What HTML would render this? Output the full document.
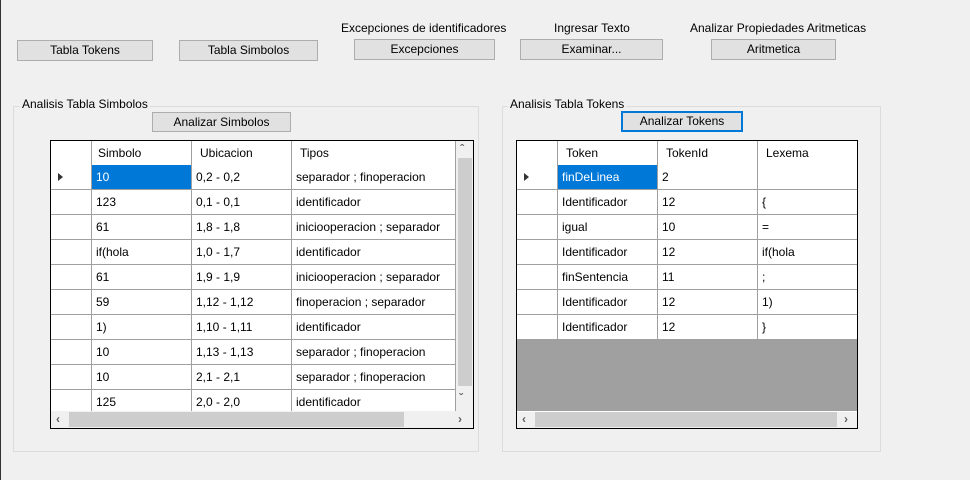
<!DOCTYPE html>
<html><head><meta charset="utf-8"><style>
*{box-sizing:border-box;margin:0;padding:0}
body{width:970px;height:480px;background:#f0f0f0;font-family:"Liberation Sans",sans-serif;font-size:12px;color:#000;position:relative;overflow:hidden}
.a{position:absolute}
.btn{position:absolute;background:#e1e1e1;border:1px solid #adadad;text-align:center;line-height:18px;font-size:12px}
.lbl{position:absolute;font-size:12px;white-space:nowrap}
.grp{position:absolute;border:1px solid #dcdcdc}
.gt{position:absolute;background:#f0f0f0;padding:0 2px;font-size:12px;white-space:nowrap}
.grid{position:absolute;border:1px solid #000;background:#fff;overflow:hidden}
.cell{position:absolute;height:25px;line-height:24px;padding-left:4px;border-right:1px solid #a0a0a0;border-bottom:1px solid #a0a0a0;background:#fff;white-space:nowrap;overflow:hidden}
.sel{background:#0078d7;color:#fff}
.arrow{position:absolute;width:0;height:0;border-top:4px solid transparent;border-bottom:4px solid transparent;border-left:5px solid #333}
.sb{position:absolute;background:#f0f0f0;color:#606060;font-size:12px;font-weight:bold}
</style></head><body>
<div class="a" style="left:0;top:0;width:1px;height:480px;background:#333"></div>
<div class="btn" style="left:17px;top:40px;width:136px;height:21px">Tabla Tokens</div>
<div class="btn" style="left:179px;top:40px;width:139px;height:21px">Tabla Simbolos</div>
<div class="lbl" style="left:341px;top:21px">Excepciones de identificadores</div>
<div class="btn" style="left:354px;top:39px;width:141px;height:21px">Excepciones</div>
<div class="lbl" style="left:554px;top:21px">Ingresar Texto</div>
<div class="btn" style="left:520px;top:39px;width:143px;height:21px">Examinar...</div>
<div class="lbl" style="left:690px;top:21px">Analizar Propiedades Aritmeticas</div>
<div class="btn" style="left:711px;top:39px;width:125px;height:21px">Aritmetica</div>

<div class="grp" style="left:13px;top:106px;width:466px;height:346px"></div>
<div class="gt" style="left:20px;top:97px">Analisis Tabla Simbolos</div>
<div class="btn" style="left:152px;top:112px;width:139px;height:20px">Analizar Simbolos</div>

<div class="grp" style="left:502px;top:106px;width:379px;height:346px"></div>
<div class="gt" style="left:508px;top:97px">Analisis Tabla Tokens</div>
<div class="btn" style="left:621px;top:111px;width:122px;height:21px;border:2px solid #0078d7;line-height:17px">Analizar Tokens</div>

<div class="grid" style="left:50px;top:140px;width:424px;height:289px">
<div class="cell" style="left:0;top:0;width:41px"></div>
<div class="cell" style="left:41px;top:0;width:100px;padding-left:6px">Simbolo</div>
<div class="cell" style="left:141px;top:0;width:100px;padding-left:8px">Ubicacion</div>
<div class="cell" style="left:241px;top:0;width:164px;padding-left:8px">Tipos</div>
<div id="r1"></div>
<div class="sb" style="left:405px;top:0;width:17px;height:270px"></div>
<div class="a" style="left:407px;top:17px;width:14px;height:228px;background:#cdcdcd"></div>
<div class="sb" style="left:409px;top:1px;background:none">&#710;</div>
<div class="sb" style="left:408px;top:250px;background:none">&#711;</div>
<div class="sb" style="left:0;top:270px;width:422px;height:17px"></div>
<div class="a" style="left:18px;top:271px;width:335px;height:15px;background:#cdcdcd"></div>
<div class="sb" style="left:5px;top:271px;background:none">&lsaquo;</div>
<div class="sb" style="left:407px;top:271px;background:none">&rsaquo;</div>
</div>

<div class="grid" style="left:516px;top:140px;width:342px;height:289px;background:#a0a0a0">
<div class="cell" style="left:0;top:0;width:41px"></div>
<div class="cell" style="left:41px;top:0;width:100px;padding-left:8px">Token</div>
<div class="cell" style="left:141px;top:0;width:100px;padding-left:8px">TokenId</div>
<div class="cell" style="left:241px;top:0;width:100px;padding-left:8px">Lexema</div>
<div id="r2"></div>
<div class="sb" style="left:0;top:270px;width:340px;height:17px;border-top:1px solid #fff"></div>
<div class="a" style="left:18px;top:271px;width:302px;height:15px;background:#cdcdcd"></div>
<div class="sb" style="left:5px;top:271px;background:none">&lsaquo;</div>
<div class="sb" style="left:327px;top:271px;background:none">&rsaquo;</div>
</div>

<script>
var d1=[["10","0,2 - 0,2","separador ; finoperacion"],["123","0,1 - 0,1","identificador"],["61","1,8 - 1,8","iniciooperacion ; separador"],["if(hola","1,0 - 1,7","identificador"],["61","1,9 - 1,9","iniciooperacion ; separador"],["59","1,12 - 1,12","finoperacion ; separador"],["1)","1,10 - 1,11","identificador"],["10","1,13 - 1,13","separador ; finoperacion"],["10","2,1 - 2,1","separador ; finoperacion"],["125","2,0 - 2,0","identificador"]];
var d2=[["finDeLinea","2",""],["Identificador","12","{"],["igual","10","="],["Identificador","12","if(hola"],["finSentencia","11",";"],["Identificador","12","1)"],["Identificador","12","}"]];
function b(d,id,w3){var h="";d.forEach(function(r,i){var t=24+i*25;
h+='<div class="cell" style="left:0;top:'+t+'px;width:41px">'+(i==0?'<div class="arrow" style="left:7px;top:8px"></div>':'')+'</div>';
h+='<div class="cell'+(i==0?' sel':'')+'" style="left:41px;top:'+t+'px;width:100px">'+r[0]+'</div>';
h+='<div class="cell" style="left:141px;top:'+t+'px;width:100px">'+r[1]+'</div>';
h+='<div class="cell" style="left:241px;top:'+t+'px;width:'+w3+'px">'+r[2]+'</div>';});
document.getElementById(id).outerHTML=h;}
b(d1,"r1",164);b(d2,"r2",100);
</script>
</body></html>
